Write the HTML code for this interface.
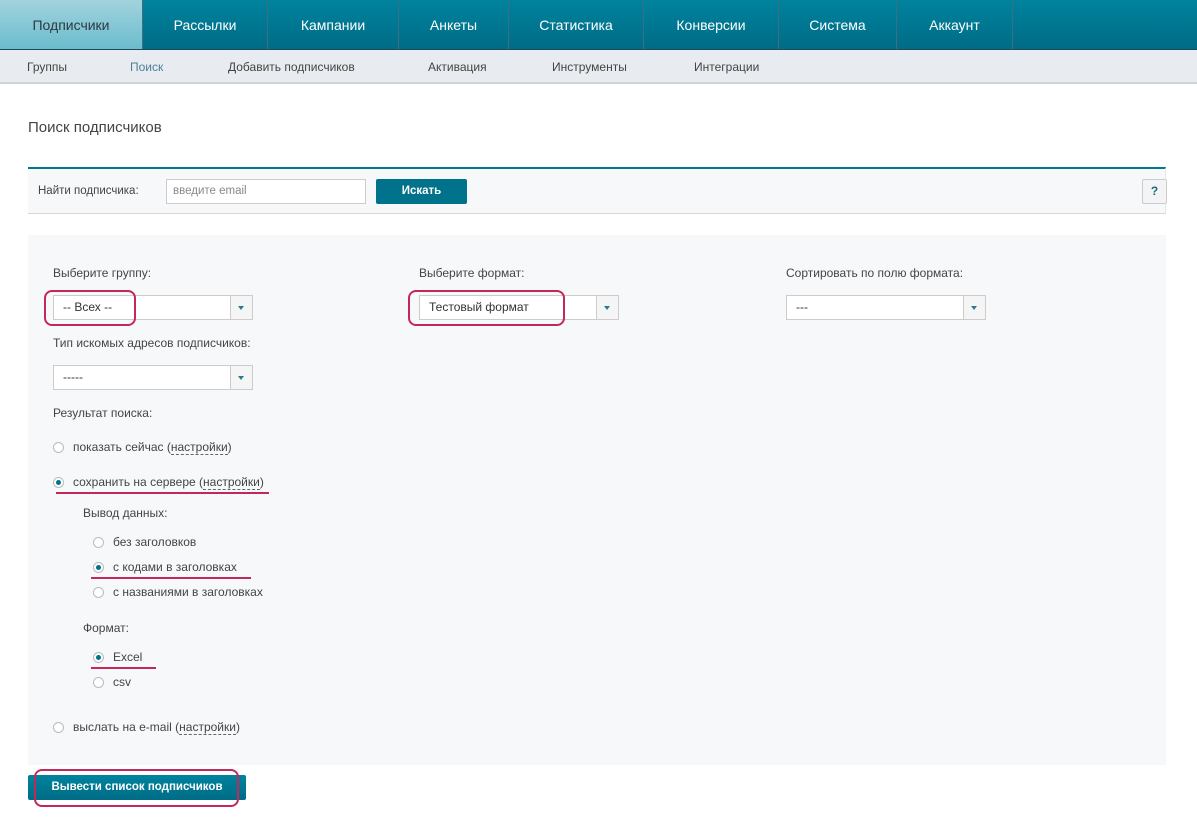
<!DOCTYPE html>
<html><head><meta charset="utf-8"><style>
*{box-sizing:border-box;margin:0;padding:0}
body{width:1197px;height:820px;background:#fff;font-family:"Liberation Sans","DejaVu Sans",sans-serif;font-size:12px;color:#444;position:relative;overflow:hidden}
.a{position:absolute;white-space:nowrap}
.nav{position:absolute;left:0;top:0;width:1197px;height:50px;background:linear-gradient(#00839e,#006c86);border-bottom:1px solid #1c4a5a}
.tab{position:absolute;top:0;height:49px;line-height:51px;text-align:center;color:#fff;font-size:14px;border-right:1px solid #3b6f82}
.sub{position:absolute;left:0;top:50px;width:1197px;height:34px;background:#e8ecf0;border-bottom:2px solid #cfd3d6}
.sel{position:absolute;height:25px;background:#fff;border:1px solid #ccc;font-size:12px;line-height:23px;padding-left:9px;color:#333}
.sel i{position:absolute;right:0;top:0;width:22px;height:23px;border-left:1px solid #ccc;background:#f5f5f5}
.sel i:after{content:"";position:absolute;left:7px;top:10px;border:3px solid transparent;border-top:4px solid #2a7a95}
.rd{position:absolute;width:11px;height:11px;border:1px solid #bbb;border-radius:50%;background:#fff}
.rd.on:after{content:"";position:absolute;left:2px;top:2px;width:5px;height:5px;border-radius:50%;background:#00718c}
.dl{border-bottom:1px dashed #666}
.hl{position:absolute;border:2px solid #c2285a;border-radius:8px}
.ul{position:absolute;height:2px;background:#c2285a}
</style></head><body>
<div class="nav">
<div class="tab" style="left:0;width:143px;background:linear-gradient(#a2d3de,#6bbccd);color:#2a3a40">Подписчики</div>
<div class="tab" style="left:143px;width:125px">Рассылки</div>
<div class="tab" style="left:268px;width:131px">Кампании</div>
<div class="tab" style="left:399px;width:110px">Анкеты</div>
<div class="tab" style="left:509px;width:135px">Статистика</div>
<div class="tab" style="left:644px;width:135px">Конверсии</div>
<div class="tab" style="left:779px;width:118px">Система</div>
<div class="tab" style="left:897px;width:116px">Аккаунт</div>
</div>
<div class="sub"></div>
<div class="a" style="left:27px;top:60px;color:#444">Группы</div>
<div class="a" style="left:130px;top:60px;color:#4a7f9a">Поиск</div>
<div class="a" style="left:228px;top:60px">Добавить подписчиков</div>
<div class="a" style="left:428px;top:60px">Активация</div>
<div class="a" style="left:552px;top:60px">Инструменты</div>
<div class="a" style="left:694px;top:60px">Интеграции</div>

<div class="a" style="left:28px;top:119px;font-size:15px;color:#444">Поиск подписчиков</div>

<div class="a" style="left:28px;top:167px;width:1138px;height:47px;background:#f7f8fa;border-top:2px solid #00788f;border-bottom:1px solid #d5d8da;border-right:1px solid #e4e6e8"></div>
<div class="a" style="left:38px;top:185px;font-size:11.5px">Найти подписчика:</div>
<div class="a" style="left:166px;top:179px;width:200px;height:25px;background:#fff;border:1px solid #ccc;font-size:11.5px;line-height:23px;padding-left:6px;color:#888">введите email</div>
<div class="a" style="left:376px;top:179px;width:91px;height:25px;background:#00728c;border-radius:2px;color:#fff;font-size:11.5px;font-weight:bold;line-height:25px;text-align:center">Искать</div>
<div class="a" style="left:1142px;top:179px;width:25px;height:25px;background:#f4f4f4;border:1px solid #ccc;border-radius:2px;color:#1a6a85;font-weight:bold;font-size:12px;line-height:23px;text-align:center">?</div>

<div class="a" style="left:28px;top:235px;width:1138px;height:530px;background:#f7f8fa"></div>
<div class="a" style="left:53px;top:266px">Выберите группу:</div>
<div class="sel" style="left:53px;top:295px;width:200px">-- Всех --<i></i></div>
<div class="hl" style="left:44px;top:290px;width:92px;height:36px"></div>
<div class="a" style="left:419px;top:266px">Выберите формат:</div>
<div class="sel" style="left:419px;top:295px;width:200px">Тестовый формат<i></i></div>
<div class="hl" style="left:408px;top:290px;width:157px;height:36px"></div>
<div class="a" style="left:786px;top:266px">Сортировать по полю формата:</div>
<div class="sel" style="left:786px;top:295px;width:200px">---<i></i></div>

<div class="a" style="left:53px;top:336px">Тип искомых адресов подписчиков:</div>
<div class="sel" style="left:53px;top:365px;width:200px">-----<i></i></div>
<div class="a" style="left:53px;top:406px">Результат поиска:</div>

<div class="rd" style="left:53px;top:442px"></div>
<div class="a" style="left:73px;top:440px">показать сейчас (<span class="dl">настройки</span>)</div>
<div class="rd on" style="left:53px;top:477px"></div>
<div class="a" style="left:73px;top:475px">сохранить на сервере (<span class="dl">настройки</span>)</div>
<div class="ul" style="left:56px;top:492px;width:213px"></div>

<div class="a" style="left:83px;top:506px">Вывод данных:</div>
<div class="rd" style="left:93px;top:537px"></div>
<div class="a" style="left:113px;top:535px">без заголовков</div>
<div class="rd on" style="left:93px;top:562px"></div>
<div class="a" style="left:113px;top:560px">с кодами в заголовках</div>
<div class="ul" style="left:91px;top:577px;width:160px"></div>
<div class="rd" style="left:93px;top:587px"></div>
<div class="a" style="left:113px;top:585px">с названиями в заголовках</div>

<div class="a" style="left:83px;top:621px">Формат:</div>
<div class="rd on" style="left:93px;top:652px"></div>
<div class="a" style="left:113px;top:650px">Excel</div>
<div class="ul" style="left:91px;top:667px;width:65px"></div>
<div class="rd" style="left:93px;top:677px"></div>
<div class="a" style="left:113px;top:675px">csv</div>

<div class="rd" style="left:53px;top:722px"></div>
<div class="a" style="left:73px;top:720px">выслать на e-mail (<span class="dl">настройки</span>)</div>

<div class="a" style="left:28px;top:775px;width:218px;height:25px;background:linear-gradient(#00839e,#006c86);border-radius:2px;color:#fff;font-size:11.5px;font-weight:bold;line-height:25px;text-align:center">Вывести список подписчиков</div>
<div class="hl" style="left:34px;top:769px;width:205px;height:38px"></div>
</body></html>
